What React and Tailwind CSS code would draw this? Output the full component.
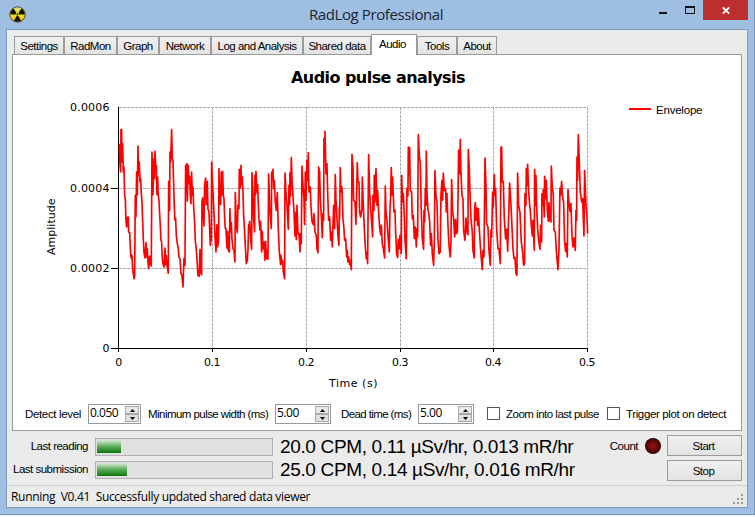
import React, { useState } from "react";

const tabs = [
  { name: "Settings", box: "w-[50px]" },
  { name: "RadMon", box: "w-[53px]" },
  { name: "Graph", box: "w-[42px]" },
  { name: "Network", box: "w-[52px]" },
  { name: "Log and Analysis", box: "w-[92px]" },
  { name: "Shared data", box: "w-[68px]" },
  { name: "Audio", box: "w-[46px]" },
  { name: "Tools", box: "w-[40px]" },
  { name: "About", box: "w-[40px]" },
];

// envelope samples, x and y in thirds of a pixel from the plot's top left
const envelope = [
  "3,109 5,169 7,194 8,67 10,67 11,164 13,109 15,194 17,179 19,264 21,274 23,339 25,359 28,329 30,329 31,374 34,376 36,419 38,449 40,454 41,444 43,484 45,499 47,514 49,509 51,264 53,329 55,194 57,262 59,116 61,204 63,164 65,224 67,214 69,256 71,284 73,339 75,394 77,434 80,452 83,406 85,449 87,424 89,464 91,484 94,446 96,469 99,476",
  "101,134 104,262 107,154 109,214 110,132 112,174 114,174 116,262 118,209 120,264 122,279 124,319 126,354 128,399 130,404 132,454 134,469 137,479 140,422 142,472 144,444 146,474 150,498 151,222 154,309 155,134 157,164 160,67 162,154 164,159 166,229 168,294 170,339 172,334 174,384 177,409 180,424 182,449 185,454 188,499 191,504 194,539 197,454 200,474",
  "202,174 204,254 206,169 207,281 210,174 212,229 214,206 216,262 218,289 220,194 222,264 224,239 226,299 229,344 231,399 234,426 236,454 239,504 243,507 245,426 247,494 250,502 251,284 253,272 255,324 257,356 259,234 262,212 264,292 267,222 269,304 272,314 274,364 276,414 279,394 280,164 282,209 284,254 286,294 289,364 291,404 293,434 296,352 298,419 301,399",
  "302,184 304,264 307,292 309,194 310,264 313,192 315,264 317,274 319,329 321,364 323,364 326,422 328,372 330,429 333,434 335,304 337,374 339,346 341,394 344,424 347,429 350,464 351,256 354,349 357,376 359,294 362,304 363,186 366,242 368,174 370,232 372,209 374,254 376,324 379,374 382,434 384,469 387,459 389,429 391,352 393,364 394,342 397,394 400,426",
  "401,196 404,254 406,334 409,374 410,204 412,262 413,192 416,254 418,232 420,289 422,334 425,369 427,342 430,434 432,372 434,424 437,404 440,459 442,402 444,454 447,429 449,456 451,200 454,299 459,364 460,194 463,209 464,186 466,244 468,219 471,284 474,309 477,256 480,364 483,434 485,454 487,472 488,444 491,469 493,459 495,494 499,514",
  "500,197 503,254 506,294 510,366 512,234 514,292 515,196 517,266 519,151 521,214 524,264 527,314 530,386 533,314 534,397 536,294 539,379 542,379 545,434 547,379 549,409 551,176 554,234 557,274 559,352 561,194 563,279 566,159 568,219 570,136 572,254 576,239 578,294 581,342 585,352 587,319 590,374 594,384 596,424 599,436",
  "601,179 604,194 606,274 609,324 612,391 614,319 616,339 617,94 619,144 620,72 623,199 626,169 628,254 631,339 634,329 637,399 639,374 642,419 644,359 646,294 649,364 651,202 653,274 656,334 659,384 662,414 663,299 664,334 666,181 668,254 671,239 674,334 677,364 679,399 682,394 685,449 687,429 689,464 691,449 694,472 696,459 699,487",
  "701,141 704,179 706,279 710,284 713,351 717,166 719,224 722,224 724,314 727,329 731,304 732,209 735,294 738,364 741,419 744,454 746,436 748,469 751,142 754,254 757,304 760,344 763,389 764,264 767,309 768,204 770,284 773,184 776,294 778,249 781,314 784,359 787,382 789,354 792,409 795,424 799,452 801,236 803,314 806,339 809,384 813,434",
  "815,309 817,269 819,181 821,262 823,209 825,264 827,314 830,309 832,374 835,439 838,451 840,396 843,424 845,384 849,439 850,204 853,284 855,259 858,324 860,394 864,454 866,242 869,266 870,119 872,204 874,121 876,249 880,254 882,334 885,324 888,394 891,359 894,419 896,364 898,389 900,82 903,144 906,169 909,314 912,394 916,426 917,309 919,344",
  "921,244 923,294 924,131 926,254 929,309 931,314 934,344 937,414 939,379 942,439 946,474 948,404 950,190 953,264 956,284 959,394 962,439 966,434 968,262 971,219 973,279 975,197 978,249 982,244 984,314 986,259 989,354 992,414 996,449 998,404 1000,217 1003,314 1006,334 1009,389 1012,336 1014,379 1017,376 1019,284 1021,129 1024,199 1026,96",
  "1028,194 1031,264 1034,274 1036,369 1040,399 1043,332 1046,374 1049,382 1050,127 1053,184 1055,254 1058,334 1062,374 1064,429 1068,452 1069,309 1071,286 1074,339 1076,302 1078,354 1080,304 1083,364 1086,414 1089,454 1092,487 1094,429 1097,449 1100,152 1103,234 1105,349 1109,359 1112,429 1116,474 1118,369 1120,389 1123,254 1125,299",
  "1128,202 1130,264 1132,244 1135,364 1139,424 1142,424 1146,469 1148,119 1150,119 1152,224 1155,222 1158,334 1162,394 1165,366 1168,432 1171,334 1174,227 1177,274 1180,334 1184,424 1187,454 1190,451 1193,499 1196,504 1198,197 1201,294 1205,314 1209,404 1213,434 1216,474 1219,469 1220,259 1223,294 1224,184 1226,234 1228,171 1231,249 1234,294",
  "1236,309 1239,354 1242,386 1244,339 1248,429 1249,187 1252,294 1253,204 1255,294 1258,364 1261,399 1265,426 1267,354 1270,404 1271,259 1274,294 1275,246 1278,329 1279,207 1282,274 1284,219 1287,309 1290,342 1292,286 1295,339 1298,344 1299,176 1302,239 1305,264 1307,369 1311,374 1314,429 1319,487 1322,429 1325,242 1327,264 1330,222 1333,269",
  "1336,284 1339,404 1342,432 1344,409 1347,449 1349,247 1352,284 1355,312 1358,289 1361,384 1364,419 1367,392 1371,429 1373,309 1375,339 1376,149 1378,219 1380,82 1383,164 1386,254 1390,284 1393,274 1397,386 1399,190 1403,294 1406,329 1408,379",
].join(" ");

function RadiationIcon() {
  return (
    <svg className="h-[17px] w-[17px]" viewBox="0 0 17 17">
      <defs>
        <linearGradient id="hazard" x1="0" y1="0" x2="0" y2="1">
          <stop offset="0" stopColor="#d8d890" />
          <stop offset="0.45" stopColor="#ece820" />
          <stop offset="1" stopColor="#ffb000" />
        </linearGradient>
      </defs>
      <circle cx="8.5" cy="8.5" r="7.7" fill="url(#hazard)" stroke="#4a4a3c" strokeWidth="1" />
      <g fill="#11110c">
        <path d="M8.5 8.5L1.3 8.5A7.2 7.2 0 0 1 4.6 2.5Z" />
        <path d="M8.5 8.5L15.7 8.5A7.2 7.2 0 0 0 12.4 2.5Z" />
        <path d="M8.5 8.5L4.9 14.7A7.2 7.2 0 0 0 12.1 14.7Z" />
      </g>
      <circle cx="8.5" cy="8.5" r="1.8" fill="#e8e020" />
      <circle cx="8.5" cy="8.5" r="1.1" fill="#222" />
    </svg>
  );
}

function TitleBar() {
  return (
    <div className="flex h-[29px] shrink-0 items-start">
      <div className="w-[110px] pt-[6px] pl-[9px]">
        <RadiationIcon />
      </div>
      <div className="flex-1 pt-[3px] pl-[199px] font-['Open_Sans',sans-serif] text-[15px] leading-[22px] tracking-[-0.4px] whitespace-nowrap text-[#1b2633]">
        RadLog Professional
      </div>
      <svg className="h-5 w-[54px]" viewBox="0 0 54 20" shapeRendering="crispEdges">
        <path d="M10 12h8v2h-8z" fill="#111" />
        <path d="M36 6h10v8h-10zM37 8v5h8v-5z" fill="#111" fillRule="evenodd" />
      </svg>
      <button className="flex h-5 w-[45px] items-center justify-center bg-[#bd2e2e]">
        <svg className="h-[7px] w-[8px]" viewBox="0 0 8 7">
          <path d="M0.8 0.3L7.2 6.7M7.2 0.3L0.8 6.7" stroke="#fff" strokeWidth="1.7" />
        </svg>
      </button>
      <div className="w-[6px]" />
    </div>
  );
}

function TabBar({ active, onSelect }) {
  return (
    <div className="flex h-[24px] items-end pl-[7px]">
      {tabs.map((tab) =>
        tab.name === active ? (
          <button
            key={tab.name}
            className={`${tab.box} relative -mb-px h-[21px] border border-b-0 border-[#9b9b9b] bg-white pr-[3px] pb-px`}
          >
            {tab.name}
          </button>
        ) : (
          <button
            key={tab.name}
            onClick={() => onSelect(tab.name)}
            className={`${tab.box} h-[18px] border border-b-0 border-[#9b9b9b] bg-linear-to-b from-[#f0f0f0] to-[#e3e3e3] pt-px whitespace-nowrap`}
          >
            {tab.name}
          </button>
        )
      )}
    </div>
  );
}

function PulseChart() {
  return (
    <svg
      className="block h-[340px] w-[728px] font-['DejaVu_Sans',sans-serif] text-[11px]"
      viewBox="13 55 728 340"
    >
      <text x="378" y="83" textAnchor="middle" fontSize="16" fontWeight="bold" textLength="174">
        Audio pulse analysis
      </text>
      <g stroke="#aaaaaa" strokeDasharray="3 1" fill="none">
        <path d="M119 107.5H588M119 188.5H588M119 268.5H588" />
        <path d="M212.5 107V348M306.5 107V348M400.5 107V348M493.5 107V348M587.5 107V348" />
      </g>
      <path
        d="M118.5 107V352M111 348.5H588M111 188.5H118M111 268.5H118M212.5 348V352M306.5 348V352M400.5 348V352M493.5 348V352M587.5 348V352"
        stroke="#000"
        fill="none"
      />
      <polyline
        points={envelope}
        transform="translate(118.3 107.3) scale(0.33333)"
        fill="none"
        stroke="#ff0000"
        strokeWidth="5"
        strokeLinejoin="round"
      />
      <g textAnchor="end">
        <text x="109" y="111" textLength="39">0.0006</text>
        <text x="109" y="192" textLength="39">0.0004</text>
        <text x="109" y="272" textLength="39">0.0002</text>
        <text x="109" y="352">0</text>
      </g>
      <g textAnchor="middle">
        <text x="118.5" y="366">0</text>
        <text x="212" y="366">0.1</text>
        <text x="306" y="366">0.2</text>
        <text x="400" y="366">0.3</text>
        <text x="493" y="366">0.4</text>
        <text x="587" y="366">0.5</text>
        <text x="353" y="387" textLength="48">Time (s)</text>
        <text transform="translate(55 227) rotate(-90)" textLength="56">Amplitude</text>
      </g>
      <path d="M629 109H651" stroke="#ff0000" strokeWidth="2" />
      <text x="656" y="114" fontSize="11.5" textLength="46" className="font-['Liberation_Sans',sans-serif]">
        Envelope
      </text>
    </svg>
  );
}

function Spinner({ value, box }) {
  return (
    <div className={`${box} flex h-[20px] border border-[#9498a0] bg-white p-px`}>
      <span className="flex-1 font-['Open_Sans',sans-serif] text-[12px] leading-[14px] tracking-[-0.5px]">
        {value}
      </span>
      <div className="flex w-[14px] flex-col">
        <button className="flex h-2 items-center justify-center border border-[#a8a8a8] bg-[#e8e8e8]">
          <svg className="h-[3px] w-[5px] shrink-0" viewBox="0 0 5 3">
            <path d="M2.5 0L5 3H0z" />
          </svg>
        </button>
        <button className="flex h-2 items-center justify-center border border-[#a8a8a8] bg-[#e0e0e0]">
          <svg className="h-[3px] w-[5px] shrink-0" viewBox="0 0 5 3">
            <path d="M0 0H5L2.5 3z" />
          </svg>
        </button>
      </div>
    </div>
  );
}

function Check({ label, labelBox }) {
  const [on, setOn] = useState(false);
  return (
    <label className="flex h-[20px] items-start gap-[6px]" onClick={() => setOn(!on)}>
      <span className={`mt-[3px] h-[13px] w-[13px] border border-[#555] ${on ? "bg-[#555]" : "bg-white"}`} />
      <span className={`${labelBox} leading-[20px]`}>{label}</span>
    </label>
  );
}

function DetectControls() {
  return (
    <div className="mt-[9px] flex h-[20px] items-center pl-[12px] leading-[20px] whitespace-nowrap">
      <span className="w-[63px] tracking-[-0.35px]">Detect level</span>
      <Spinner value="0.050" box="w-[53px]" />
      <span className="ml-[7px] w-[127px] tracking-[-0.55px]">Minimum pulse width (ms)</span>
      <Spinner value="5.00" box="w-[56px]" />
      <span className="ml-[10px] w-[77px] tracking-[-0.6px]">Dead time (ms)</span>
      <Spinner value="5.00" box="w-[56px]" />
      <div className="ml-[13px] flex">
        <Check label="Zoom into last pulse" labelBox="w-[101px] tracking-[-0.5px]" />
        <Check label="Trigger plot on detect" labelBox="w-[102px] tracking-[-0.37px]" />
      </div>
    </div>
  );
}

function Reading({ label, fill, text }) {
  return (
    <div className="flex h-[23px] items-center whitespace-nowrap">
      <span className="w-[81px] text-right">{label}</span>
      <div className="ml-[7px] h-[18px] w-[178px] border border-[#b0b0b0] bg-[#e0e0e0] p-px">
        <div className={`${fill} h-[13px] bg-linear-to-b from-[#dce8dc] via-[#58ae58] to-[#007600]`} />
      </div>
      <span className="ml-[7px] text-[19px] leading-[23px] tracking-[-0.35px]">{text}</span>
    </div>
  );
}

function BottomPanel() {
  return (
    <div className="flex h-[54px] justify-between">
      <div className="pt-[4px]">
        <Reading label="Last reading" fill="w-[24px]" text="20.0 CPM, 0.11 µSv/hr, 0.013 mR/hr" />
        <Reading label="Last submission" fill="w-[30px]" text="25.0 CPM, 0.14 µSv/hr, 0.016 mR/hr" />
      </div>
      <div className="flex pt-[4px] pr-[5px]">
        <span className="mr-[7px] h-[22px] leading-[22px]">Count</span>
        <svg className="mt-[3px] mr-[6px] h-[16px] w-[16px]" viewBox="0 0 16 16">
          <defs>
            <radialGradient id="led">
              <stop offset="0" stopColor="#981414" />
              <stop offset="0.6" stopColor="#650808" />
              <stop offset="1" stopColor="#300404" />
            </radialGradient>
          </defs>
          <circle cx="8" cy="8" r="8" fill="url(#led)" />
        </svg>
        <div className="flex flex-col gap-[4px]">
          <button className="h-[21px] w-[75px] border border-[#9b9b9b] bg-linear-to-b from-[#f0f0f0] to-[#e2e2e2] pt-[2px] pr-[2px] leading-[17px]">
            Start
          </button>
          <button className="h-[21px] w-[75px] border border-[#9b9b9b] bg-linear-to-b from-[#f0f0f0] to-[#e2e2e2] pt-[2px] pr-[2px] leading-[17px]">
            Stop
          </button>
        </div>
      </div>
    </div>
  );
}

function StatusBar() {
  return (
    <div className="flex flex-1 justify-between border-t border-[#cfcfcf] font-['Open_Sans',sans-serif] text-[12px] leading-[21px] tracking-[-0.32px] whitespace-pre">
      <span className="pl-[4px]">Running  V0.41  Successfully updated shared data viewer</span>
      <svg className="mt-[8px] mr-[3px] h-[11px] w-[11px]" viewBox="0 0 11 11" fill="#999" shapeRendering="crispEdges">
        <path d="M8 0h2v2h-2zM4 4h2v2h-2zM8 4h2v2h-2zM0 8h2v2h-2zM4 8h2v2h-2zM8 8h2v2h-2z" />
      </svg>
    </div>
  );
}

export default function App() {
  const [active, setActive] = useState("Audio");

  return (
    <div className="h-[517px] w-[755px] overflow-hidden bg-[#f4f6f8] font-['Liberation_Sans',Arial,sans-serif] text-[11.5px] text-black">
      <div className="flex h-[515px] flex-col border-r border-b border-[#7491b3] bg-[#9ebee2]">
        <TitleBar />
        <div className="mr-[6px] ml-[6px] flex h-[479px] flex-col border border-[#7f9bbb] bg-[#ebebeb] tracking-[-0.5px]">
          <TabBar active={active} onSelect={setActive} />
          <div className="ml-[5px] h-[377px] w-[730px] shrink-0 border border-[#9b9b9b] bg-white">
            <PulseChart />
            <DetectControls />
          </div>
          <BottomPanel />
          <StatusBar />
        </div>
      </div>
    </div>
  );
}
